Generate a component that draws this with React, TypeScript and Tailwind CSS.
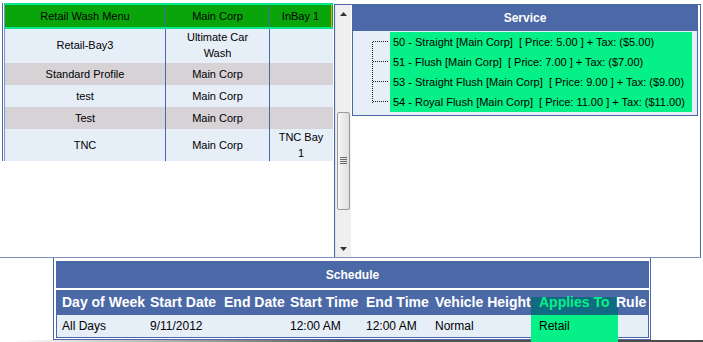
import React from "react";

const leftRows = [
  { a: "Retail-Bay3", b: "Ultimate Car Wash", c: "", h: "h-[34px] pb-[2px]", bg: "bg-[#e6eef8]" },
  { a: "Standard Profile", b: "Main Corp", c: "", h: "h-[22px] pb-px", bg: "bg-[#d6d2d6]" },
  { a: "test", b: "Main Corp", c: "", h: "h-[22px] pb-px", bg: "bg-[#e6eef8]" },
  { a: "Test", b: "Main Corp", c: "", h: "h-[22px] pb-px", bg: "bg-[#d6d2d6]" },
  { a: "TNC", b: "Main Corp", c: "TNC Bay 1", h: "h-[32px]", bg: "bg-[#e6eef8]" },
];

const services = [
  "50 - Straight [Main Corp]  [ Price: 5.00 ] + Tax: ($5.00)",
  "51 - Flush [Main Corp]  [ Price: 7.00 ] + Tax: ($7.00)",
  "53 - Straight Flush [Main Corp]  [ Price: 9.00 ] + Tax: ($9.00)",
  "54 - Royal Flush [Main Corp]  [ Price: 11.00 ] + Tax: ($11.00)",
];

const cols = [
  { h: "Day of Week", d: "All Days", w: "w-[90px] pl-[5px]" },
  { h: "Start Date", d: "9/11/2012", w: "w-[74px] pl-[3px]" },
  { h: "End Date", d: "", w: "w-[66px] pl-[3px]" },
  { h: "Start Time", d: "12:00 AM", w: "w-[76px] pl-[3px]" },
  { h: "End Time", d: "12:00 AM", w: "w-[69px] pl-[3px]" },
  { h: "Vehicle Height", d: "Normal", w: "w-[104px] pl-[3px]" },
  { h: "Applies To", d: "Retail", w: "w-[77px] pl-[3px]", hl: true },
  { h: "Rule", d: "", w: "w-[34px] pl-[3px]" },
];

function Scrollbar() {
  return (
    <div className="w-[16px] h-full flex flex-col bg-[#efefef] border-l border-[#e2e2e2]">
      <div className="h-[17px] flex items-center justify-center">
        <svg width="7" height="4" viewBox="0 0 7 4">
          <path d="M0 4 L3.5 0 L7 4 Z" fill="#333" />
        </svg>
      </div>
      <div className="h-[90px]" />
      <div className="h-[98px] mx-px rounded-[2px] border border-[#9a9a9a] bg-gradient-to-r from-[#f6f6f6] to-[#dedede] flex items-center justify-center">
        <svg width="7" height="8" viewBox="0 0 7 8">
          <path d="M0 0.5 H7 M0 2.5 H7 M0 4.5 H7 M0 6.5 H7" stroke="#6a6a6a" strokeWidth="1" />
        </svg>
      </div>
      <div className="flex-1" />
      <div className="h-[17px] flex items-center justify-center">
        <svg width="7" height="4" viewBox="0 0 7 4">
          <path d="M0 0 L3.5 4 L7 0 Z" fill="#333" />
        </svg>
      </div>
    </div>
  );
}

function TreeLines() {
  const ys = [9.5, 29.5, 49.5, 69.5];
  return (
    <svg width="37" height="80" viewBox="0 0 37 80" className="shrink-0">
      <line x1="19.5" y1="10" x2="19.5" y2="71" stroke="#222" strokeWidth="1" strokeDasharray="1 1" />
      {ys.map((y) => (
        <line key={y} x1="20" y1={y} x2="36" y2={y} stroke="#222" strokeWidth="1" strokeDasharray="1 1" />
      ))}
    </svg>
  );
}

export default function App() {
  return (
    <div className="relative w-[703px] h-[342px] bg-white overflow-hidden font-['Liberation_Sans',Arial,sans-serif] text-black">
      {/* top region */}
      <div className="flex h-[258px] w-[701px] border-b border-[#7d8fb8]">
        {/* left table */}
        <div className="w-[334px] pl-[2px] pt-[3px]">
          <div className="border-l border-[#4a69a6] pl-px h-[158px] w-[331px]">
            <div className="border-l border-[#7d95c6] w-[329px] text-[11px] leading-[16px]">
              <div className="flex h-[26px] bg-[#0aa50a] border-y-2 border-[#05e88f]">
                <div className="w-[160px] flex items-center justify-center">Retail Wash Menu</div>
                <div className="w-[104px] border-l border-[#4a69a6] flex items-center justify-center">Main Corp</div>
                <div className="w-[63px] border-l border-r border-[#4a69a6] border-r-[#f0a020] flex items-center justify-center">InBay 1</div>
              </div>
              {leftRows.map((r, i) => (
                <div key={i} className={`flex ${r.bg}`}>
                  <div className={`w-[160px] flex items-center justify-center text-center ${r.h}`}>{r.a}</div>
                  <div className={`w-[104px] border-l border-[#4a69a6] flex items-center justify-center text-center px-4 ${r.h}`}>{r.b}</div>
                  <div className={`w-[63px] border-l border-[#4a69a6] flex items-center justify-center text-center px-2 ${r.h}`}>{r.c}</div>
                </div>
              ))}
            </div>
          </div>
        </div>
        {/* frame with scrollbar + service */}
        <div className="flex-1 mt-[4px] border-t border-l border-r border-[#4a69a6] flex">
          <Scrollbar />
          <div className="ml-[1px]">
            <div className="w-[346px] border-x border-b border-[#4a69a6]">
              <div className="h-[26px] bg-[#4a69a6] flex items-center justify-center text-white font-bold text-[12px]">Service</div>
              <div className="bg-[#e6eef8] flex pt-px pb-[3px] pr-[5px]">
                <TreeLines />
                <div className="flex-1 bg-[#05f087] text-[11px] pl-[3px]">
                  {services.map((s) => (
                    <div key={s} className="h-[20px] leading-[20px] whitespace-pre">{s}</div>
                  ))}
                </div>
              </div>
            </div>
          </div>
        </div>
      </div>

      {/* schedule */}
      <div className="ml-[53px] w-[598px] border-x border-b border-[#4a69a6] pt-[3px] pl-[2px] pr-px pb-px">
        <div className="h-[27px] bg-[#4a69a6] flex items-center justify-center text-white font-bold text-[12px]">Schedule</div>
        <div className="h-[2px]" />
        <div className="border-x border-b border-[#4a69a6]">
          <div className="flex h-[25px] bg-[#4a69a6] text-white font-bold text-[14px] items-center">
            {cols.map((c) => (
              <div key={c.h} className={`${c.w} whitespace-nowrap relative h-full flex items-center`}>
                {c.hl && <div className="absolute left-[-5px] top-[7px] bottom-0 w-[87px] bg-[#106a80]" />}
                <span className={c.hl ? "relative text-[#05f087]" : "relative"}>{c.h}</span>
              </div>
            ))}
          </div>
          <div className="flex h-[22px] bg-[#e6eef8] text-[12px] items-center">
            {cols.map((c) => (
              <div key={c.h} className={`${c.w} whitespace-nowrap relative h-full flex items-center`}>
                {c.hl && <div className="absolute left-[-5px] top-0 h-[27px] w-[87px] bg-[#05f087] z-10" />}
                <span className={c.hl ? "relative z-20" : "relative"}>{c.d}</span>
              </div>
            ))}
          </div>
        </div>
      </div>
      <div className="ml-[12px] h-[3px] bg-gradient-to-r from-white via-[#555] to-[#4a4a4a]" />
    </div>
  );
}
